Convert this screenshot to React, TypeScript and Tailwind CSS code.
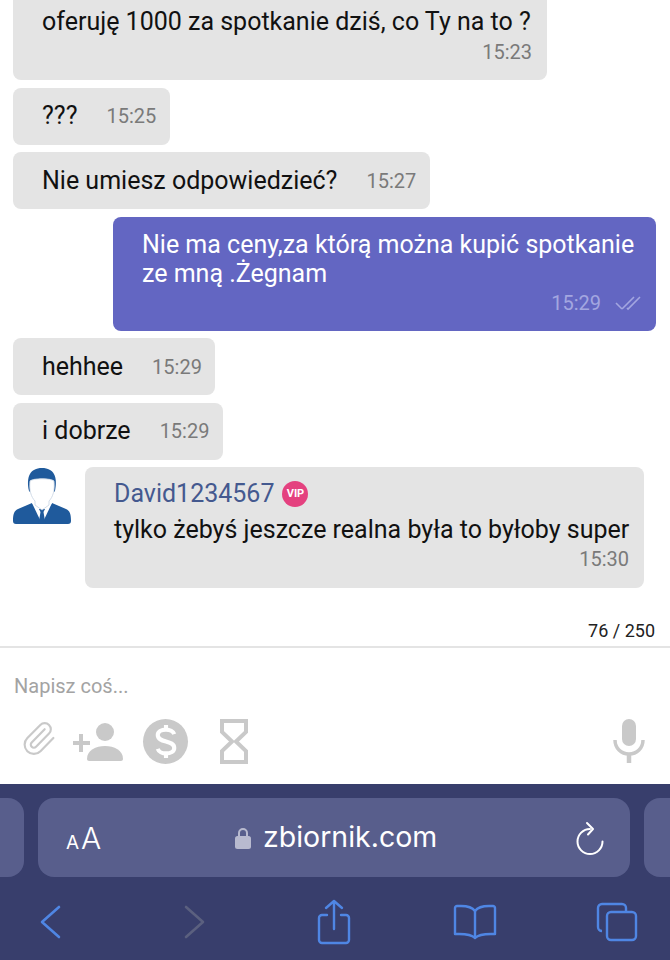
// small chat bubble with the time on the same line
function InlineBubble({ text, time, gap }: { text: string; time: string; gap: string }) {
  return (
    <div className="flex h-[57px] w-fit items-center rounded-lg bg-[#e4e4e4] pl-[29px] pr-[13.500px]">
      <span className="text-[25px] leading-[28px] text-[#111]">{text}</span>
      <span className={`${gap} text-[20px] leading-[28px] text-[#7a7a7a]`}>{time}</span>
    </div>
  );
}

function Avatar() {
  return (
    <svg viewBox="0 0 58 58" className="h-[58px] w-[58px] shrink-0">
      <path d="M0 54c0-7 1-10 5-12l14-6 10 14 10-14 14 6c4 2 5 5 5 12 0 2-1 3-3 3H3c-2 0-3-1-3-3Z" fill="#1f5a9c" />
      <path d="M19 36l10 21 10-21-4-3H23Z" fill="#fff" />
      <path d="M26 42h6l-1.500 3 2 12h-7l2-12Z" fill="#1f5a9c" />
      <path d="M16 24C13 10 17 1 29 1s16 9 13 23l-1 1V14c-3-3-21-3-24 0v11Z" fill="#1f5a9c" />
      <path d="M17 14c3-3 21-3 24 0 1 9-1 16-5 20v4l-7 5-7-5v-4c-4-4-6-11-5-20Z" fill="#fff" stroke="#c7d3e2" strokeWidth="0.800" />
    </svg>
  );
}

function ComposerIcons() {
  return (
    <div className="flex h-[50px] items-center text-[#c9c9c9]">
      <svg viewBox="0 0 24 24" className="mb-[6px] ml-[20px] h-[37px] w-[37px]" fill="none" stroke="currentColor" strokeWidth="1.400" strokeLinecap="round" strokeLinejoin="round">
        <path d="m16 6-8.414 8.586a2 2 0 0 0 2.829 2.829l8.414-8.586a4 4 0 1 0-5.657-5.657l-8.379 8.551a6 6 0 1 0 8.485 8.485l8.379-8.551" />
      </svg>
      <svg viewBox="0 0 50 40" className="ml-[16px] h-[40px] w-[50px]" fill="currentColor">
        <circle cx="32" cy="11" r="9" />
        <path d="M14 38c0-9 9-13 18-13s18 4 18 13c0 1-1 2-2 2H16c-1 0-2-1-2-2Z" />
        <path d="M6 13h4v7h7v4h-7v7H6v-7H0v-4h6Z" />
      </svg>
      <div className="ml-[20px] flex h-[45px] w-[45px] items-center justify-center rounded-full bg-[#c9c9c9]">
        <svg viewBox="0 0 24 36" className="h-[33px] w-[22px]" fill="none" stroke="#fff" strokeWidth="4.500">
          <path d="M21 10c-1-3-5-5-9-5-5 0-9 2-9 6 0 9 18 5 18 14 0 4-4 6-9 6-4 0-8-2-9-5" />
          <path d="M12 0v5M12 31v5" />
        </svg>
      </div>
      <svg viewBox="0 0 28 45" className="ml-[32px] h-[45px] w-[28px]" fill="none" stroke="currentColor" strokeWidth="4">
        <path d="M2 2h24v11L16 22.500 26 32v11H2V32l10-9.500L2 13Z" />
      </svg>
      <svg viewBox="0 0 32 44" className="ml-auto mr-[25px] h-[44px] w-[32px]" fill="none">
        <rect x="9" y="0" width="14" height="27" rx="7" fill="currentColor" />
        <path d="M2 21c0 8 6 14 14 14s14-6 14-14" stroke="currentColor" strokeWidth="3.500" />
        <path d="M16 34v10" stroke="currentColor" strokeWidth="4.500" />
      </svg>
    </div>
  );
}

function BrowserChrome() {
  return (
    <div className="h-[176px] bg-[#383e6c] pt-[14px]">
      <div className="flex h-[79px] gap-[14px]">
        <div className="-ml-[40px] w-[64px] shrink-0 rounded-2xl bg-[#585e8c]" />
        <div className="flex w-[592px] shrink-0 items-center rounded-2xl bg-[#585e8c] pl-[28px] pr-[25px] text-white">
          <span className="w-[36px] whitespace-nowrap font-['Inter',sans-serif] leading-none">
            <span className="text-[19px]">A</span>
            <span className="ml-[2px] text-[30px] font-light">A</span>
          </span>
          <div className="ml-[133px] flex items-center">
            <svg viewBox="0 0 16 24" className="h-[24px] w-[16px]">
              <path d="M4 11V7a4 4 0 0 1 8 0v4" fill="none" stroke="#b8bacf" strokeWidth="2" />
              <rect x="0" y="10" width="16" height="13" rx="2.500" fill="#b8bacf" />
            </svg>
            <span className="ml-[12px] font-['Inter',sans-serif] text-[28.500px] leading-none">zbiornik.com</span>
          </div>
          <svg viewBox="0 0 30 34" className="ml-auto h-[34px] w-[30px]" fill="none" stroke="#fff" strokeWidth="2" strokeLinecap="round" strokeLinejoin="round">
            <path d="M15 8a12.500 12.500 0 1 0 12.500 12.500" />
            <path d="M12 2l6 6-5 5.500" />
          </svg>
        </div>
        <div className="w-[64px] shrink-0 rounded-2xl bg-[#585e8c]" />
      </div>
      <div className="flex h-[83px] items-center pt-[6px] text-[#4f86e4]">
        <svg viewBox="0 0 22 34" className="ml-[39px] h-[34px] w-[22px]" fill="none" stroke="currentColor" strokeWidth="2.600" strokeLinecap="round" strokeLinejoin="round">
          <path d="M20 2 3 17l17 15" />
        </svg>
        <svg viewBox="0 0 22 34" className="ml-[123px] h-[34px] w-[22px]" fill="none" stroke="#5b607f" strokeWidth="2.600" strokeLinecap="round" strokeLinejoin="round">
          <path d="M2 2l17 15L2 32" />
        </svg>
        <svg viewBox="0 0 34 46" className="ml-[111px] h-[46px] w-[34px]" fill="none" stroke="currentColor" strokeWidth="2.400" strokeLinecap="round" strokeLinejoin="round">
          <path d="M10 16H5a3 3 0 0 0-3 3v22a3 3 0 0 0 3 3h24a3 3 0 0 0 3-3V19a3 3 0 0 0-3-3h-5" />
          <path d="M17 30V2M9 9l8-7 8 7" />
        </svg>
        <svg viewBox="0 0 44 36" className="ml-[102px] h-[36px] w-[44px]" fill="none" stroke="currentColor" strokeWidth="2.400" strokeLinecap="round" strokeLinejoin="round">
          <path d="M22 7C19 3 14 2 8 2H4a2 2 0 0 0-2 2v26c6 0 15-1 20 4 5-5 14-4 20-4V4a2 2 0 0 0-2-2h-4c-6 0-11 1-14 5Z" />
          <path d="M22 7v27" />
        </svg>
        <svg viewBox="0 0 42 40" className="ml-[99px] h-[40px] w-[42px]" fill="none" stroke="currentColor" strokeWidth="2.400" strokeLinejoin="round">
          <path d="M6 29a4 4 0 0 1-4-4V6a4 4 0 0 1 4-4h20a4 4 0 0 1 4 4v3" />
          <rect x="11" y="10" width="29" height="28" rx="4" />
        </svg>
      </div>
    </div>
  );
}

export default function App() {
  return (
    <div className="flex h-[960px] w-[670px] flex-col overflow-hidden bg-white font-['Roboto',sans-serif]">
      <div className="flex h-[646px] flex-col gap-[7.500px] px-[13px]">
        <div className="-mt-[20px] h-[100px] w-[534px] shrink-0 rounded-lg bg-[#e4e4e4] pl-[29px] pr-[15px] pt-[28px]">
          <p className="text-[25px] leading-[28px] text-[#111]">oferuję 1000 za spotkanie dziś, co Ty na to ?</p>
          <p className="mt-[2px] text-right text-[20px] leading-[28px] text-[#7a7a7a]">15:23</p>
        </div>
        <InlineBubble text="???" time="15:25" gap="ml-[29px]" />
        <InlineBubble text="Nie umiesz odpowiedzieć?" time="15:27" gap="ml-[29px]" />
        <div className="ml-[100px] h-[114px] w-[543px] shrink-0 rounded-lg bg-[#6366c2] pl-[29px] pr-[15px] pt-[13px]">
          <p className="text-[25px] leading-[29px] text-white">Nie ma ceny,za którą można kupić spotkanie ze mną .Żegnam</p>
          <div className="mt-[1px] flex items-center justify-end">
            <span className="text-[20px] leading-[28px] text-[#a3a6e0]">15:29</span>
            <svg viewBox="0 0 26 16" className="ml-[14px] h-[16px] w-[26px]" fill="none" stroke="#a3a6e0" strokeWidth="1.600">
              <path d="M1 8l6 6M7 14 19 2M12 13l1 1L25 2" />
            </svg>
          </div>
        </div>
        <InlineBubble text="hehhee" time="15:29" gap="ml-[29px]" />
        <InlineBubble text="i dobrze" time="15:29" gap="ml-[29px]" />
        <div className="flex items-start">
          <Avatar />
          <div className="ml-[14px] h-[121px] w-[559px] rounded-lg bg-[#e4e4e4] pl-[29px] pr-[15px] pt-[12px]">
            <div className="flex items-center">
              <span className="text-[25px] leading-[29px] text-[#44598f]">David1234567</span>
              <span className="ml-[8px] flex h-[26px] w-[26px] items-center justify-center rounded-full bg-[#e4417f] text-[11px] font-bold leading-none text-white">VIP</span>
            </div>
            <p className="mt-[7px] whitespace-nowrap text-[25px] leading-[29px] text-[#111]">tylko żebyś jeszcze realna była to byłoby super</p>
            <p className="text-right text-[20px] leading-[30px] text-[#7a7a7a]">15:30</p>
          </div>
        </div>
        <p className="mr-[2px] mt-[25px] text-right text-[18px] leading-[20px] text-[#222]">76 / 250</p>
      </div>
      <div className="h-[138px] border-t-2 border-[#e4e4e4] px-0 pt-[26px]">
        <p className="pl-[14px] text-[20px] leading-[24px] text-[#a3a3a3]">Napisz coś...</p>
        <div className="mt-[18px]">
          <ComposerIcons />
        </div>
      </div>
      <BrowserChrome />
    </div>
  );
}
